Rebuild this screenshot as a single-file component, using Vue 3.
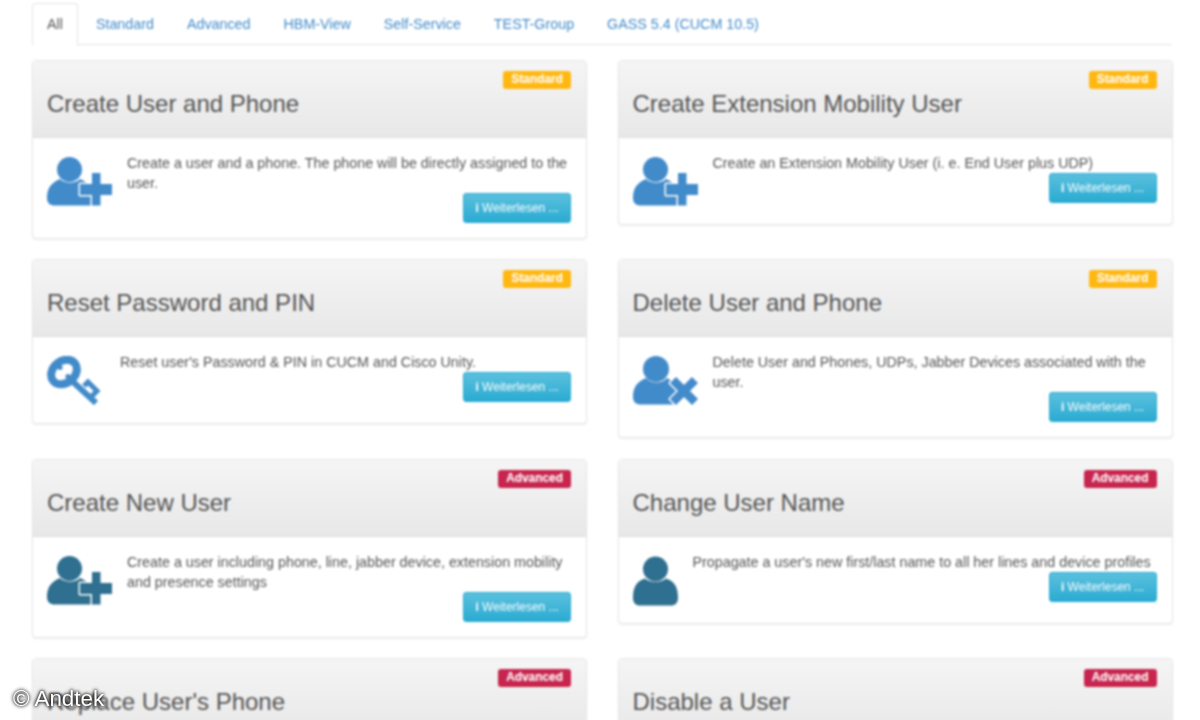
<script setup>
const tabs = ['All', 'Standard', 'Advanced', 'HBM-View', 'Self-Service', 'TEST-Group', 'GASS 5.4 (CUCM 10.5)']
const cards = [
  { title: 'Create User and Phone', badge: 'Standard', icon: 'plus', text: 'Create a user and a phone. The phone will be directly assigned to the user.' },
  { title: 'Create Extension Mobility User', badge: 'Standard', icon: 'plus', text: 'Create an Extension Mobility User (i. e. End User plus UDP)' },
  { title: 'Reset Password and PIN', badge: 'Standard', icon: 'key', text: "Reset user's Password & PIN in CUCM and Cisco Unity." },
  { title: 'Delete User and Phone', badge: 'Standard', icon: 'cross', text: 'Delete User and Phones, UDPs, Jabber Devices associated with the user.' },
  { title: 'Create New User', badge: 'Advanced', icon: 'plus', dark: true, text: 'Create a user including phone, line, jabber device, extension mobility and presence settings' },
  { title: 'Change User Name', badge: 'Advanced', icon: 'user', dark: true, text: "Propagate a user's new first/last name to all her lines and device profiles" },
  { title: "Replace User's Phone", badge: 'Advanced' },
  { title: 'Disable a User', badge: 'Advanced' },
]
</script>

<template>
  <div class="frame">
    <div class="page">
      <ul class="tabs">
        <li v-for="(t, i) in tabs" :key="t" class="tab" :class="{ active: i === 0 }">{{ t }}</li>
      </ul>
      <div class="grid">
        <section v-for="c in cards" :key="c.title" class="card">
          <header class="head">
            <span class="badge" :class="c.badge.toLowerCase()">{{ c.badge }}</span>
            <h2>{{ c.title }}</h2>
          </header>
          <div v-if="c.text" class="body">
            <svg v-if="c.icon === 'plus'" class="icon w65" :class="{ dark: c.dark }" viewBox="0 0 65 50">
              <circle cx="22.500" cy="12.500" r="12.500" />
              <path d="M0 41C0 31 4 26 13 22C18 27 28 27 33 22C38 24 42 27 44 32V48.500H8C3 48.500 0 46 0 41Z" />
              <path class="cut" d="M45 16H53.500V27H65V38H53.500V48.500H45V38H33V27H45Z" />
            </svg>
            <svg v-else-if="c.icon === 'cross'" class="icon w65" viewBox="0 0 65 50">
              <circle cx="23" cy="13" r="13" />
              <path d="M0 41C0 31 4 26 13 22C18 28 29 28 34 22C38 24 42 27 44 32V48.500H8C3 48.500 0 46 0 41Z" />
              <path class="cut" d="M43 21L51 29L59 21L65 27L57 35L65 43L59 49L51 41L43 49L37 43L45 35L37 27Z" />
            </svg>
            <svg v-else-if="c.icon === 'key'" class="icon w58" viewBox="0 0 58 50">
              <ellipse class="line" cx="17" cy="16" rx="14" ry="11" transform="rotate(-40 17 16)" stroke-width="8" />
              <circle cx="20.900" cy="20.600" r="2.500" />
              <circle cx="13.100" cy="11.400" r="2.500" />
              <path class="line" d="M24 24L49 47" stroke-width="6" />
              <path class="line" d="M37 30L41 26L50 35L44 41" stroke-width="5" />
            </svg>
            <svg v-else class="icon w45" :class="{ dark: c.dark }" viewBox="0 0 45 50">
              <circle cx="22.500" cy="13" r="12.500" />
              <path d="M0 42C0 32 3 25 12 22.500C17 27 28 27 33 22.500C42 25 45 32 45 42C45 47 42 49.500 38 49.500H7C3 49.500 0 47 0 42Z" />
            </svg>
            <div class="content">
              <p>{{ c.text }}</p>
              <button class="btn"><b>i</b> Weiterlesen ...</button>
            </div>
          </div>
        </section>
      </div>
    </div>
    <div class="mark">© Andtek</div>
  </div>
</template>

<style>
html, body { margin: 0; background: #fff; }
</style>

<style scoped>
.frame {
  position: relative;
  width: 1200px;
  height: 720px;
  overflow: hidden;
  background: #fff;
  font-family: "Liberation Sans", Arial, sans-serif;
}
.page {
  padding: 3px 28px 0 32px;
  filter: blur(0.9px);
}
.tabs {
  display: flex;
  list-style: none;
  margin: 0;
  padding: 0;
  height: 41px;
  border-bottom: 1px solid #e4e4e4;
}
.tab {
  padding: 0 15px;
  margin-right: 3px;
  height: 41px;
  line-height: 42px;
  font-size: 14.300px;
  color: #428bca;
}
.tab.active {
  color: #555;
  background: #fff;
  border: 1px solid #e4e4e4;
  border-bottom-color: #fff;
  border-radius: 4px 4px 0 0;
  line-height: 40px;
  padding: 0 14px;
}
.grid {
  display: grid;
  grid-template-columns: 555px 555px;
  column-gap: 30.500px;
  row-gap: 20.300px;
  align-items: start;
  margin-top: 15px;
}
.card {
  border: 1px solid #e6e6e6;
  border-radius: 4px;
  box-shadow: 0 1px 2px rgba(0, 0, 0, 0.07);
  background: #fff;
  overflow: hidden;
}
.head {
  position: relative;
  height: 77px;
  box-sizing: border-box;
  padding: 29px 15px 0 14px;
  background: linear-gradient(#f5f5f5, #e8e8e8);
  border-bottom: 1px solid #dddddd;
}
h2 {
  margin: 0;
  font-size: 24px;
  line-height: 27px;
  font-weight: 400;
  color: #555;
}
.badge {
  position: absolute;
  top: 10px;
  right: 15px;
  padding: 0 8px;
  height: 18px;
  line-height: 16px;
  font-size: 11.900px;
  font-weight: 700;
  color: #fff;
  border-radius: 3px;
}
.standard { background: #ffb812; }
.advanced { background: #c7254e; }
.body {
  display: flex;
  gap: 15px;
  padding: 15px 15px 15px 14px;
  min-height: 56px;
}
.icon {
  flex: none;
  height: 50px;
  margin-top: 4px;
  fill: #428bca;
}
.icon.dark { fill: #2f6f8f; }
.cut {
  stroke: #fff;
  stroke-width: 3;
  stroke-linejoin: round;
  paint-order: stroke;
}
.line {
  fill: none;
  stroke: #428bca;
}
.w65 { width: 65px; }
.w58 { width: 58px; }
.w45 { width: 45px; }
.content { flex: 1; min-width: 0; display: flex; flex-direction: column; }
p {
  margin: 0;
  font-size: 14.300px;
  line-height: 20px;
  color: #555;
}
.btn {
  align-self: flex-end;
  width: 108px;
  height: 30px;
  padding: 0;
  border: 1px solid #2aabd2;
  border-radius: 3px;
  background: linear-gradient(#5bc0de, #2aabd2);
  color: #fff;
  font: 12px "Liberation Sans", Arial, sans-serif;
}
.mark {
  position: absolute;
  left: 13px;
  bottom: 9px;
  font-size: 22.400px;
  line-height: 24px;
  color: #fff;
  text-shadow: 0 0 3px #000, 0 0 4px #000;
}
</style>
